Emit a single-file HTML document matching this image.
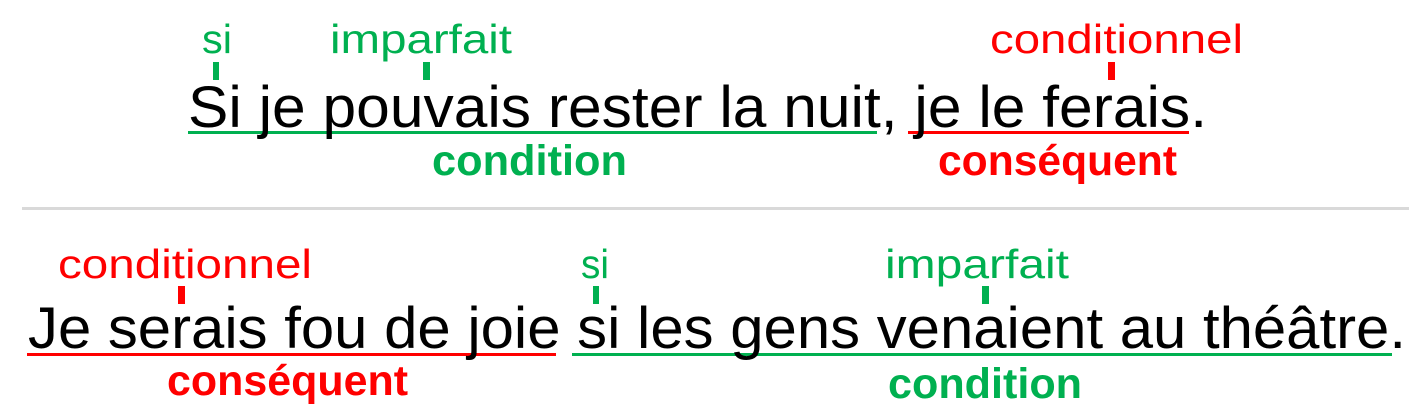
<!DOCTYPE html>
<html><head><meta charset="utf-8"><style>
html,body{margin:0;padding:0;background:#fff;width:1426px;height:414px;overflow:hidden}
text{font-family:"Liberation Sans",sans-serif}
</style></head><body>
<svg width="1426" height="414" viewBox="0 0 1426 414" xmlns="http://www.w3.org/2000/svg">
<g fill="#00b050">
<text x="202" y="53" font-size="41" textLength="30" lengthAdjust="spacingAndGlyphs">si</text>
<text x="330" y="53" font-size="41" textLength="182" lengthAdjust="spacingAndGlyphs">imparfait</text>
<rect x="213" y="62" width="6" height="18"/>
<rect x="423" y="62" width="7" height="18"/>
<text x="432" y="175" font-size="43" font-weight="bold" textLength="195" lengthAdjust="spacingAndGlyphs">condition</text>
<rect x="188" y="131" width="689" height="3"/>
<text x="581" y="278" font-size="41" textLength="28" lengthAdjust="spacingAndGlyphs">si</text>
<text x="885" y="278" font-size="41" textLength="184" lengthAdjust="spacingAndGlyphs">imparfait</text>
<rect x="593" y="286" width="6" height="18"/>
<rect x="982" y="286" width="7" height="18"/>
<text x="888" y="398" font-size="43" font-weight="bold" textLength="194" lengthAdjust="spacingAndGlyphs">condition</text>
<rect x="572" y="353" width="820" height="3"/>
</g>
<g fill="#ff0000">
<text x="990" y="53" font-size="41" textLength="253" lengthAdjust="spacingAndGlyphs">conditionnel</text>
<rect x="1108" y="62" width="7" height="18"/>
<text x="938" y="175" font-size="43" font-weight="bold" textLength="239" lengthAdjust="spacingAndGlyphs">conséquent</text>
<rect x="908" y="131" width="281" height="3"/>
<text x="58" y="278" font-size="41" textLength="254" lengthAdjust="spacingAndGlyphs">conditionnel</text>
<rect x="178" y="286" width="7" height="18"/>
<text x="167" y="395" font-size="43" font-weight="bold" textLength="241" lengthAdjust="spacingAndGlyphs">conséquent</text>
<rect x="27" y="353" width="529" height="3"/>
</g>
<text x="188" y="127" font-size="58" fill="#000" textLength="1019" lengthAdjust="spacingAndGlyphs">Si je pouvais rester la nuit, je le ferais.</text>
<text x="28" y="348" font-size="58" fill="#000" textLength="1378" lengthAdjust="spacingAndGlyphs">Je serais fou de joie si les gens venaient au théâtre.</text>
<rect x="22" y="207" width="1387" height="3" fill="#d9d9d9"/>
</svg>
</body></html>
